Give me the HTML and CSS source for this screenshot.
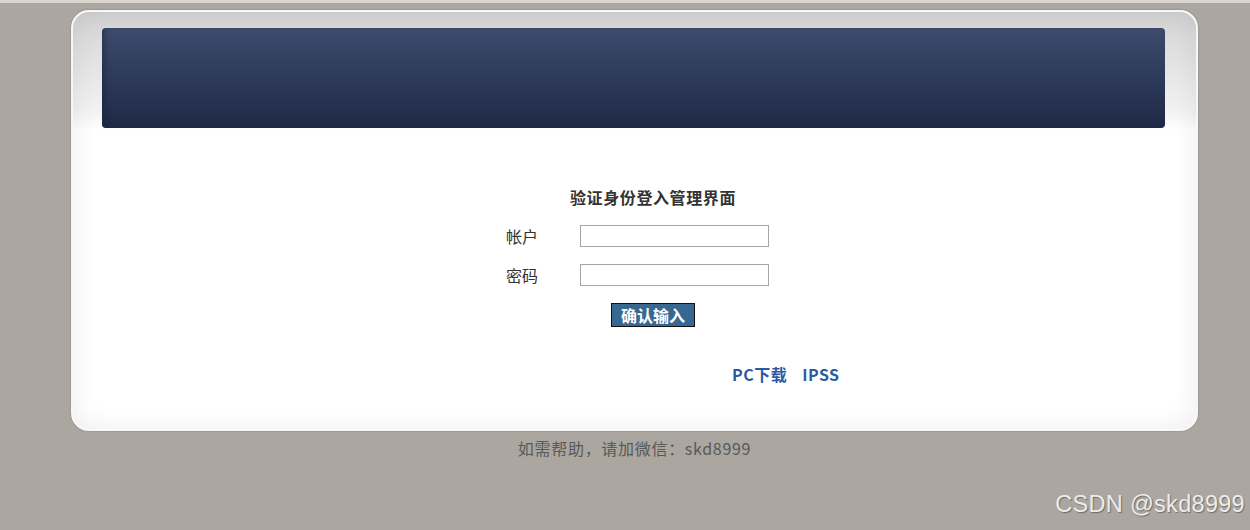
FILE: index.html
```html
<!DOCTYPE html>
<html>
<head>
    <title>验证身份登入管理界面</title>
    <meta charset="utf-8">
    <link rel="stylesheet" href="styles.css">
</head>
<body>
    <div class="page">
        <div class="panel">
            <div class="banner"></div>

            <div class="login">
                <h3 class="login-title">验证身份登入管理界面</h3>
                <div class="row">
                    <label class="label" for="user">帐户</label>
                    <input class="field" type="text" id="user">
                </div>
                <div class="row">
                    <label class="label" for="pwd">密码</label>
                    <input class="field" type="password" id="pwd">
                </div>
                <div class="actions">
                    <button class="submit">确认输入</button>
                </div>
                <div class="links">
                    <a href="#">PC下载</a>
                    <a href="#">IPSS</a>
                </div>
            </div>
        </div>
        <p class="help">如需帮助，请加微信：skd8999</p>
    </div>
    <div class="watermark">CSDN @skd8999</div>
</body>
</html>
```

FILE: styles.css
```css
body {
    font-family: "Noto Sans CJK SC", "Noto Sans", sans-serif;
    margin: 0;
    background: #aba69f;
    border-top: 3px solid #d9d6d1;
    min-height: 527px;
    color: #333;
    font-size: 16px;
}
.page {
    width: 1127px;
    margin: 7px 0 0 71px;
}
.panel {
    background: linear-gradient(#d3d3d3 0px, #e6e6e6 60px, #f2f2f2 100px, #fff 118px);
    border: 2px solid #f7f7f7;
    border-radius: 18px;
    box-shadow: 0 0 2px rgba(0,0,0,0.25), inset 0 0 26px rgba(0,0,0,0.08);
    padding: 16px 31px 42px 29px;
    height: 359px;
}
.banner {
    height: 100px;
    border-radius: 4px;
    background: linear-gradient(#3e4b6c, #1e2947);
    box-shadow: inset 6px 0 6px -4px rgba(20,30,60,0.5);
}
.login {
    margin-left: 404px;
    padding-top: 57px;
}
.login-title {
    margin: 0 0 16px 64px;
    font-size: 16px;
    line-height: 24px;
    font-weight: bold;
    letter-spacing: 0.6px;
    color: #333;
}
.row {
    display: flex;
    align-items: center;
    height: 22px;
    margin-bottom: 17px;
}
.label {
    width: 74px;
    line-height: 22px;
}
.field {
    width: 189px;
    height: 22px;
    box-sizing: border-box;
    border: 1px solid #aaa59f;
    padding: 0 4px;
    margin: 0;
}
.actions {
    padding-left: 105px;
}
.submit {
    width: 84px;
    height: 24px;
    margin: 0;
    padding: 0;
    background: #376891;
    border: 1px solid #111;
    color: white;
    font-family: inherit;
    font-size: 16px;
    font-weight: bold;
    line-height: 20px;
}
.links {
    margin: 35px 0 0 226px;
    line-height: 24px;
    display: flex;
    gap: 15px;
}
.links a {
    color: #2b5aa3;
    font-weight: bold;
    letter-spacing: 0.5px;
    text-decoration: none;
}
.help {
    margin: 5px 0 0;
    text-align: center;
    line-height: 24px;
    letter-spacing: 0.7px;
    color: #595959;
}
.watermark {
    position: absolute;
    right: 5px;
    top: 491px;
    font-family: "Liberation Sans", Arial, sans-serif;
    font-size: 23.5px;
    letter-spacing: 0.3px;
    color: #ececec;
    text-shadow: 1px 1px 1px rgba(0,0,0,0.35);
}
```
